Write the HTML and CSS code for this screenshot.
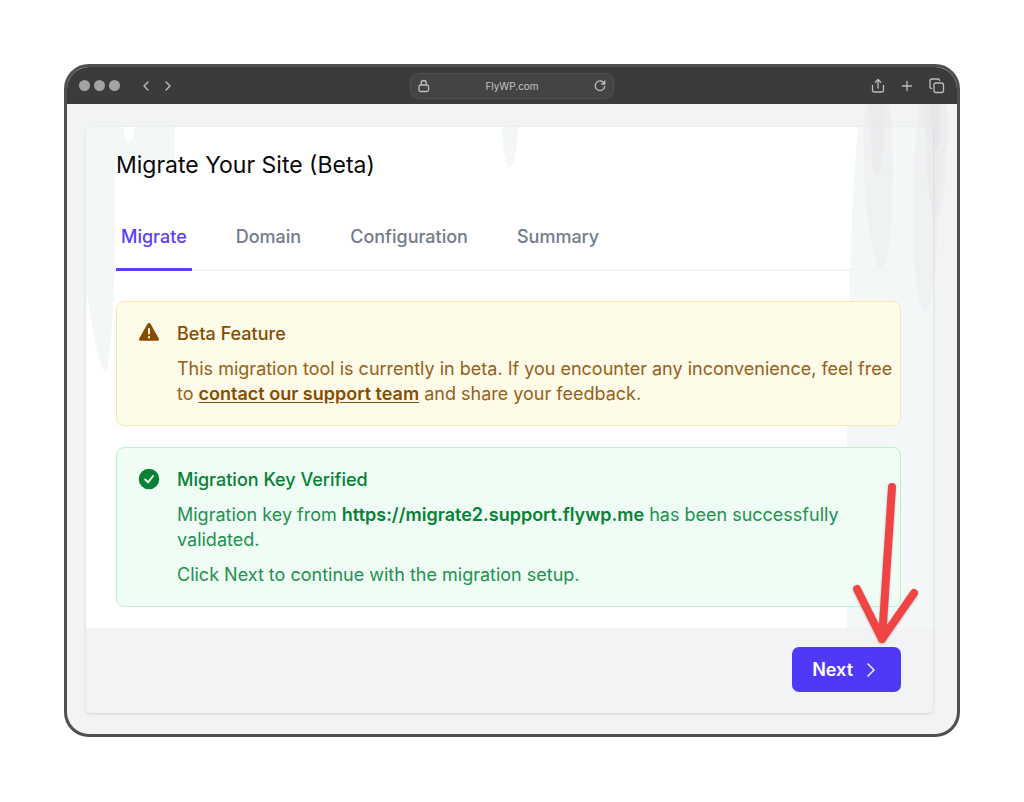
FILE: index.html
```html
<!DOCTYPE html>
<html lang="en">
<head>
  <meta charset="UTF-8" />
  <meta name="viewport" content="width=device-width, initial-scale=1.0" />
  <title>FlyWP.com</title>
  <link rel="stylesheet" href="styles.css">
</head>

<body>

  <div class="window">
    <!-- Browser toolbar -->
    <header class="toolbar">
      <div class="toolbar-left">
        <div class="dots"><span></span><span></span><span></span></div>
        <div class="history">
          <button type="button" aria-label="Back">
            <svg width="6" height="10" viewBox="0 0 6 10"><path d="M5 1 1 5l4 4" /></svg>
          </button>
          <button type="button" aria-label="Forward">
            <svg width="6" height="10" viewBox="0 0 6 10"><path d="m1 1 4 4-4 4" /></svg>
          </button>
        </div>
      </div>

      <div class="address">
        <svg width="12" height="14" viewBox="0 0 12 14"><rect x="1" y="6" width="9.5" height="6.500" rx="1.500" /><path d="M3.200 6V4a2.500 2.500 0 0 1 5 0v2" /></svg>
        <span>FlyWP.com</span>
        <button type="button" aria-label="Reload">
          <svg width="12" height="12" viewBox="0 0 12 12"><path d="M10.300 3.500A4.800 4.800 0 1 0 10.800 6.500M10.800 1v3H7.800" /></svg>
        </button>
      </div>

      <div class="toolbar-right">
        <button type="button" aria-label="Share">
          <svg width="14" height="16" viewBox="0 0 14 16"><path d="M1.500 7.500v5a1.500 1.500 0 0 0 1.500 1.500h8a1.500 1.500 0 0 0 1.500-1.500v-5M7 10V1.500M4.300 4.200 7 1.500l2.700 2.700" /></svg>
        </button>
        <button type="button" aria-label="New tab">
          <svg width="12" height="12" viewBox="0 0 12 12"><path d="M6 1.500v9M1.500 6h9" /></svg>
        </button>
        <button type="button" aria-label="Show tabs">
          <svg width="16" height="16" viewBox="0 0 16 16"><rect x="5" y="5" width="9.500" height="9.500" rx="2" /><path d="M2.500 10.500a1.500 1.500 0 0 1-1.500-1.500V3a2 2 0 0 1 2-2h6a1.500 1.500 0 0 1 1.500 1.500" /></svg>
        </button>
      </div>
    </header>

    <main class="page">
      <section class="card">
        <svg class="drips drips-left" width="100" height="260" viewBox="0 0 100 260">
          <path d="M0 0H89L88 34H29C30 110 28 225 20 243C12 245 4 180 0 165Z" />
          <path class="hole" d="M38 0h10c0 8-2 16-5 16s-5-8-5-16Z" />
        </svg>
        <svg class="drips drips-center" width="20" height="42" viewBox="0 0 20 42">
          <path d="M2 0h16c0 18-4 40-8 40S2 18 2 0Z" />
        </svg>
        <svg class="drips drips-right" width="86" height="501" viewBox="0 0 86 501">
          <path d="M11 0H86V501H0V300C2 180 3 90 11 0Z" />
        </svg>

        <div class="card-body">
          <h1>Migrate Your Site (Beta)</h1>

          <nav class="tabs">
            <a href="#" class="active">Migrate</a>
            <a href="#">Domain</a>
            <a href="#">Configuration</a>
            <a href="#">Summary</a>
          </nav>

          <div class="alert alert-warning">
            <svg width="22" height="22" viewBox="0 0 22 22"><path d="M9.200 2.200a2 2 0 0 1 3.600 0l8 14.200a1.600 1.600 0 0 1-1.400 2.400H2.600a1.600 1.600 0 0 1-1.400-2.400Z" /><path class="mark" d="M11 7v4.500M11 15v.500" /></svg>
            <div>
              <h2>Beta Feature</h2>
              <p>This migration tool is currently in beta. If you encounter any inconvenience, feel free to <a href="#">contact our support team</a> and share your feedback.</p>
            </div>
          </div>

          <div class="alert alert-success">
            <svg width="22" height="22" viewBox="0 0 22 22"><circle cx="11" cy="11" r="10.300" /><path class="mark" d="m7.200 11.500 2.800 2.800 5-6.300" /></svg>
            <div>
              <h2>Migration Key Verified</h2>
              <p>Migration key from <strong>https://migrate2.support.flywp.me</strong> has been successfully validated.</p>
              <p>Click Next to continue with the migration setup.</p>
            </div>
          </div>
        </div>

        <footer class="card-footer">
          <button type="button" class="next-btn">
            Next
            <svg width="10" height="16" viewBox="0 0 10 16"><path d="m2 2 6 6-6 6" /></svg>
          </button>
          <!-- Hand drawn arrow pointing at the button -->
          <svg class="arrow" width="72" height="170" viewBox="0 0 72 170"><path d="M41 10 31 162M6 112l25 50 32-46" /></svg>
        </footer>
      </section>

      <svg class="drips drips-top" width="110" height="220" viewBox="0 0 110 220">
        <path d="M19 0h24c6 60 2 165-9 165S12 60 19 0Z" />
        <path d="M23 0h15c0 36-3 72-8 72s-7-36-7-72Z" />
        <path d="M72 0h20c1 90-2 208-14 208S62 90 72 0Z" />
        <path d="M78 0h22c2 50-4 116-11 116S77 50 78 0Z" />
        <path d="M83 0h13c0 20-2 44-6 44s-7-24-7-44Z" />
      </svg>
    </main>
  </div>

</body>
</html>
```

FILE: styles.css
```css
* {
  box-sizing: border-box;
}
body {
  margin: 0;
  padding: 64px;
  background: #fff;
  color: #09090b;
  font-family: Inter, "Liberation Sans", sans-serif;
  font-size: 18px;
  line-height: 25px;
}
h1, h2, p {
  margin: 0;
}
button {
  padding: 0;
  border: 0;
  background: none;
  color: inherit;
  font: inherit;
  cursor: pointer;
}
svg {
  display: block;
  flex: none;
  fill: none;
}

.window {
  border: 3px solid #4f4f4f;
  border-radius: 25px;
  background: #f2f3f5;
  overflow: hidden;
}

.toolbar {
  display: grid;
  grid-template-columns: 1fr 204px 1fr;
  align-items: center;
  height: 37px;
  padding: 0 12px;
  background: #3b3b3b;
  color: #c4c4c4;
}
.toolbar svg {
  stroke: #bdbdbd;
  stroke-width: 1.3;
  stroke-linecap: round;
  stroke-linejoin: round;
}
.toolbar-left, .toolbar-right, .dots, .history {
  display: flex;
  align-items: center;
}
.toolbar-left {
  gap: 23px;
}
.toolbar-right {
  justify-content: flex-end;
  gap: 16px;
}
.dots {
  gap: 4px;
}
.dots span {
  width: 11px;
  height: 11px;
  border-radius: 50%;
  background: #a3a3a3;
}
.history {
  gap: 16px;
}
.address {
  display: flex;
  align-items: center;
  justify-content: space-between;
  height: 26px;
  padding: 0 7px;
  border: 1px solid #505050;
  border-radius: 8px;
  background: #444;
  font-size: 10px;
  line-height: 16px;
}

.page {
  position: relative;
  padding: 23px 24px 21px 19px;
}
.card {
  position: relative;
  border-radius: 5px;
  background: #fff;
  box-shadow: 0 1px 3px rgba(0, 0, 0, 0.14);
}
.card-body {
  position: relative;
  padding: 24px 32px 21px 30px;
}

/* Decorative drips */
.drips {
  position: absolute;
  top: 0;
  fill: #f3f7f8;
  pointer-events: none;
}
.drips .hole {
  fill: #fff;
}
.drips-left {
  left: 0;
}
.drips-center {
  left: 0;
  right: 0;
  margin: 0 auto;
}
.drips-right {
  right: 0;
}
.drips-top {
  right: 0;
  fill: rgba(222, 218, 220, 0.18);
}

h1 {
  font-size: 23px;
  font-weight: 400;
  line-height: 28px;
}

.tabs {
  display: flex;
  gap: 39px;
  margin-top: 24px;
  margin-bottom: 30px;
  border-bottom: 2px solid #f3f4f6;
}
.tabs a {
  margin-bottom: -2px;
  padding: 21px 5px 19px;
  border-bottom: 3px solid transparent;
  color: #737b8b;
  font-weight: 500;
  text-decoration: none;
}
.tabs a.active {
  border-color: #5b3ff8;
  color: #5b3ff8;
}

.alert {
  display: flex;
  gap: 17px;
  padding: 19px 5px 19px 21px;
  border: 1px solid;
  border-radius: 8px;
}
.alert + .alert {
  margin-top: 21px;
}
.alert svg {
  margin-top: 1px;
}
.alert .mark {
  stroke-width: 2;
  stroke-linecap: round;
  stroke-linejoin: round;
}
.alert h2 {
  font-size: 18px;
  font-weight: 500;
  line-height: 25px;
}
.alert p {
  margin-top: 10px;
}
.alert-warning {
  border-color: #fae6b4;
  background: #fefbe8;
  color: #96601a;
}
.alert-warning svg {
  fill: #894b00;
}
.alert-warning .mark {
  stroke: #fefbe8;
}
.alert-warning h2, .alert-warning a {
  color: #894b00;
}
.alert-warning a {
  font-weight: 600;
  text-underline-offset: 2px;
}
.alert-success {
  border-color: #bdf0ce;
  background: #f0fdf4;
  color: #219150;
}
.alert-success svg {
  fill: #058236;
}
.alert-success .mark {
  fill: none;
  stroke: #f0fdf4;
}
.alert-success h2, .alert-success strong {
  color: #058236;
}
.alert-success strong {
  font-weight: 600;
}

.card-footer {
  position: relative;
  display: flex;
  justify-content: flex-end;
  padding: 19px 32px 21px;
  border-radius: 0 0 5px 5px;
  background: #f2f3f5;
}
.next-btn {
  display: flex;
  align-items: center;
  gap: 13px;
  padding: 10px 25px 10px 20px;
  border-radius: 7px;
  background: #4f39f6;
  color: #fff;
  font-weight: 600;
}
.next-btn svg {
  stroke: #fff;
  stroke-width: 1.4;
  stroke-linecap: round;
  stroke-linejoin: round;
}
.arrow {
  position: absolute;
  top: -151px;
  right: 10px;
  stroke: #f04444;
  stroke-width: 8;
  stroke-linecap: round;
  stroke-linejoin: round;
  filter: drop-shadow(0 1px 1px rgba(0, 0, 0, 0.25));
  pointer-events: none;
}
```
